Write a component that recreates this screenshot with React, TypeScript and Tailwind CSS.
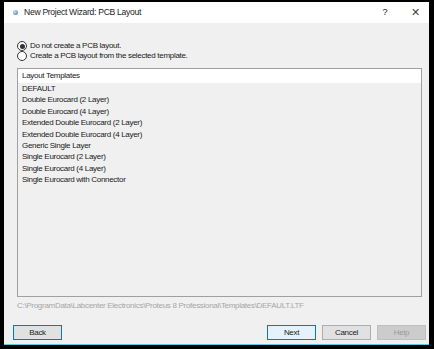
const templates = [
  "DEFAULT",
  "Double Eurocard (2 Layer)",
  "Double Eurocard (4 Layer)",
  "Extended Double Eurocard (2 Layer)",
  "Extended Double Eurocard (4 Layer)",
  "Generic Single Layer",
  "Single Eurocard (2 Layer)",
  "Single Eurocard (4 Layer)",
  "Single Eurocard with Connector",
];

function Radio({ checked, label }: { checked?: boolean; label: string }) {
  return (
    <div className="flex h-[10px] items-center gap-[3px]">
      <span className="flex h-[10px] w-[10px] items-center justify-center rounded-full border border-[#333] bg-white">
        {checked && <span className="h-[5px] w-[5px] rounded-full bg-[#333]" />}
      </span>
      <span>{label}</span>
    </div>
  );
}

function Button({ label, variant }: { label: string; variant: "focus" | "hover" | "normal" | "disabled" }) {
  const styles = {
    focus: "border-[#0078d7] bg-[#e1e1e1] text-[#222]",
    hover: "border-[#0078d7] bg-[#e5f1fb] text-[#222]",
    normal: "border-[#adadad] bg-[#e1e1e1] text-[#222]",
    disabled: "border-[#bfbfbf] bg-[#cccccc] text-[#9a9a9a]",
  }[variant];
  return (
    <div className={`flex h-[15px] w-[49px] items-center justify-center border ${styles}`}>{label}</div>
  );
}

export default function App() {
  return (
    <div
      className="h-[349px] w-[434px] bg-black pt-[2px] pl-[4px]"
      style={{ fontFamily: '"Liberation Sans", Arial, sans-serif' }}
    >
      <div className="flex h-[343px] w-[425px] flex-col border-b border-[#5ec8e0] bg-[#f0f0f0] text-[8px] tracking-[-0.3px] text-[#1a1a1a]">
        <div className="flex h-[21px] items-center bg-white pl-[9px] pr-[9px]">
          <span className="h-[5px] w-[5px] rounded-full bg-[radial-gradient(circle_at_35%_35%,#cfe3f5,#3a6ea5)]" />
          <span className="ml-[6px] text-[8.6px]">New Project Wizard: PCB Layout</span>
          <span className="ml-auto text-[9px]">?</span>
          <span className="ml-[24px] text-[11px] text-[#444]">✕</span>
        </div>
        <div className="flex flex-1 flex-col pl-[13px] pr-[3px]">
          <div className="mt-[18px] flex flex-col">
            <Radio checked label="Do not create a PCB layout." />
            <Radio label="Create a PCB layout from the selected template." />
          </div>
          <div className="mt-[7px] flex h-[229px] w-[405px] flex-col border border-[#a0a0a0]">
            <div className="flex h-[14px] items-center bg-white pl-[4px]">Layout Templates</div>
            <div className="flex flex-col pl-[4px] leading-[11.4px]">
              {templates.map((t) => (
                <span key={t}>{t}</span>
              ))}
            </div>
          </div>
          <div className="mt-[3px] text-[#a6a6a6]">
            C:\ProgramData\Labcenter Electronics\Proteus 8 Professional\Templates\DEFAULT.LTF
          </div>
          <div className="mt-[13px] flex items-center">
            <div className="-ml-[4px]">
              <Button label="Back" variant="focus" />
            </div>
            <div className="ml-auto flex gap-[6px]">
              <Button label="Next" variant="hover" />
              <Button label="Cancel" variant="normal" />
              <Button label="Help" variant="disabled" />
            </div>
          </div>
        </div>
      </div>
    </div>
  );
}
